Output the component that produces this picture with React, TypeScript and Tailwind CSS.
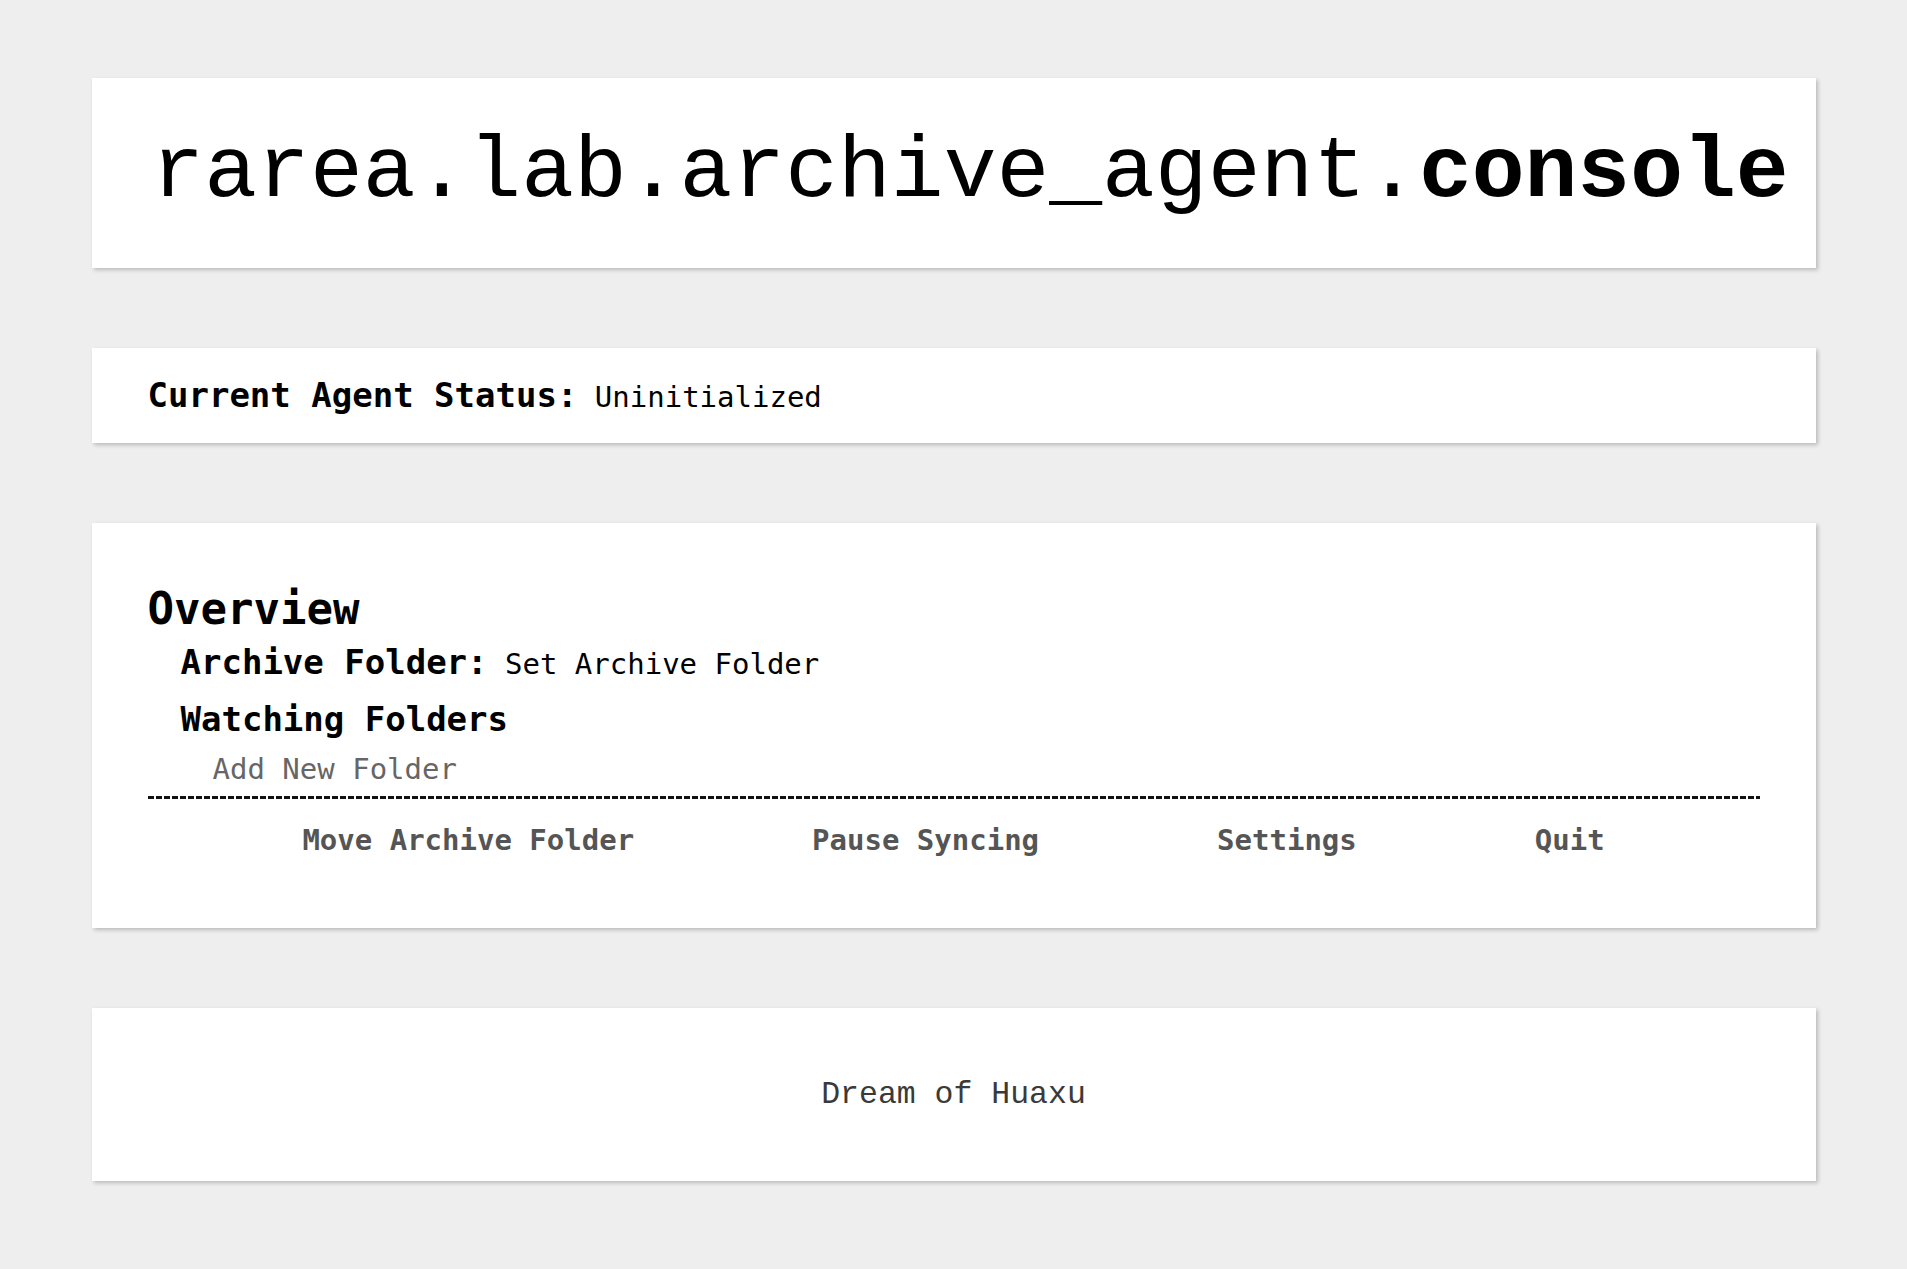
import React from "react";

const mono = { fontFamily: '"DejaVu Sans Mono", monospace' };
const courier = {
  fontFamily: '"Courier New", Courier, "Nimbus Mono PS", "Nimbus Mono L", FreeMono, "Liberation Mono", monospace',
};

export default function App() {
  return (
    <div className="min-h-[1269px] bg-[#eeeeee] pt-[78px] pb-[88px]">
      <div className="mx-auto flex w-[1724px] flex-col gap-[80px]">
        {/* Title card */}
        <div className="flex h-[190px] items-center bg-white pl-[60px] shadow-[2px_2px_4px_rgba(0,0,0,0.22)]">
          <h1 className="whitespace-nowrap text-[88px] font-normal leading-normal text-black" style={courier}>
            rarea.lab.archive_agent.<span className="font-bold">console</span>
          </h1>
        </div>

        {/* Status card */}
        <div
          className="flex h-[95px] items-center bg-white px-[56px] shadow-[2px_2px_4px_rgba(0,0,0,0.22)]"
          style={mono}
        >
          <p className="whitespace-pre text-black">
            <span className="text-[34px] font-bold">Current Agent Status:</span>
            <span className="text-[29px]"> Uninitialized</span>
          </p>
        </div>

        {/* Overview card */}
        <div
          className="flex h-[405px] flex-col bg-white px-[56px] pt-[58px] shadow-[2px_2px_4px_rgba(0,0,0,0.22)]"
          style={mono}
        >
          <h2 className="text-[44px] font-bold leading-[55px] text-black">Overview</h2>
          <p className="whitespace-pre pl-[33px] leading-[52px] text-black">
            <span className="text-[34px] font-bold">Archive Folder:</span>
            <span className="text-[29px]"> Set Archive Folder</span>
          </p>
          <h3 className="pl-[33px] text-[34px] font-bold leading-[48px] text-black">Watching Folders</h3>
          <p className="pl-[65px] text-[29px] leading-[53px] text-[#666666]">Add New Folder</p>
          <div className="h-[3px] bg-[repeating-linear-gradient(to_right,#111111_0px,#111111_6px,transparent_6px,transparent_8px)]" />
          <div className="mt-[21px] flex justify-center gap-[178px] text-[29px] font-bold leading-[40px] text-[#555555]">
            <span>Move Archive Folder</span>
            <span>Pause Syncing</span>
            <span>Settings</span>
            <span>Quit</span>
          </div>
        </div>

        {/* Footer card */}
        <div className="flex h-[173px] items-center justify-center bg-white shadow-[2px_2px_4px_rgba(0,0,0,0.22)]">
          <p className="text-[31.5px] text-[#3a3a3a]" style={courier}>
            Dream of Huaxu
          </p>
        </div>
      </div>
    </div>
  );
}
